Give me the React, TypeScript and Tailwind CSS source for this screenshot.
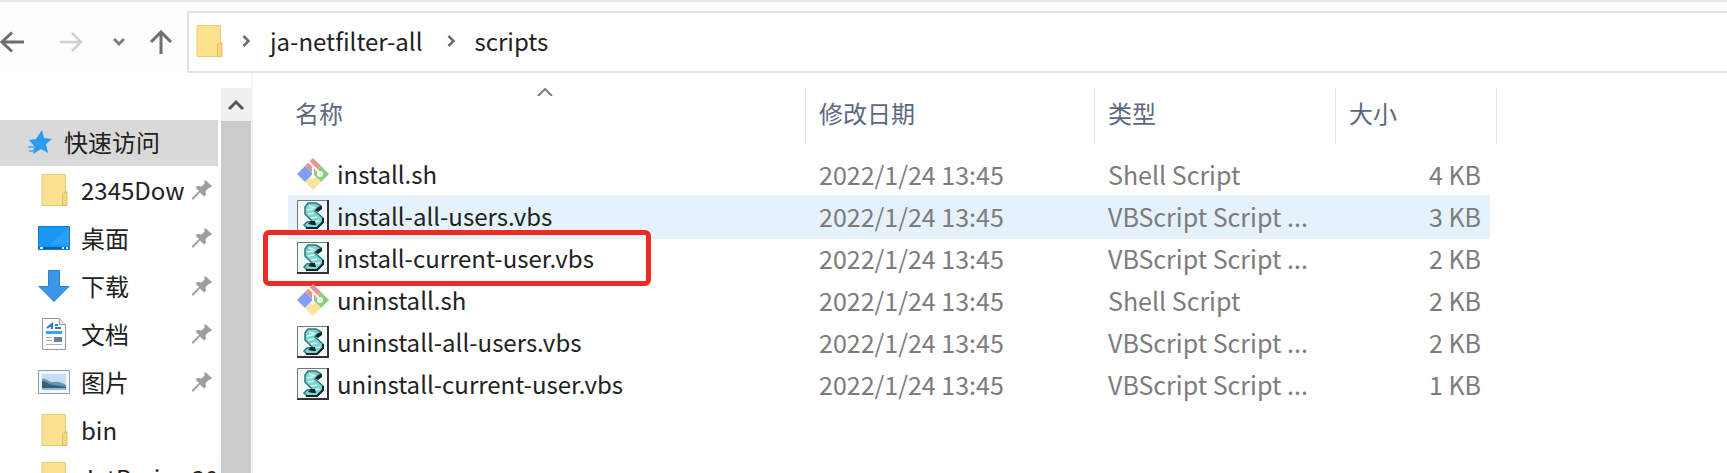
import React from 'react';
import { clsx } from 'clsx';

type FileKind = 'sh' | 'vbs';

interface FileEntry {
  name: string;
  kind: FileKind;
  type: string;
  size: string;
  hovered?: boolean;
  marked?: boolean;
}

const files: FileEntry[] = [
  { name: 'install.sh', kind: 'sh', type: 'Shell Script', size: '4 KB' },
  { name: 'install-all-users.vbs', kind: 'vbs', type: 'VBScript Script ...', size: '3 KB', hovered: true },
  { name: 'install-current-user.vbs', kind: 'vbs', type: 'VBScript Script ...', size: '2 KB', marked: true },
  { name: 'uninstall.sh', kind: 'sh', type: 'Shell Script', size: '2 KB' },
  { name: 'uninstall-all-users.vbs', kind: 'vbs', type: 'VBScript Script ...', size: '2 KB' },
  { name: 'uninstall-current-user.vbs', kind: 'vbs', type: 'VBScript Script ...', size: '1 KB' },
];

const FolderIcon = () => (
  <svg className="h-8 w-8 shrink-0" viewBox="0 0 32 32" aria-hidden="true">
    <path d="M4 0.5h23.5v31H4z" fill="#fce28f" stroke="#eccb72" />
    <path d="M24.5 19.5l4.5-2v14h-4.5z" fill="#f8d67a" stroke="#e8c060" />
  </svg>
);

const DesktopIcon = () => (
  <svg className="h-8 w-8 shrink-0" viewBox="0 0 32 32" aria-hidden="true">
    <path d="M0.5 4.5h31v23h-31z" fill="#1a97f2" stroke="#1279cc" />
    <path d="M31 5v18H12z" fill="#2aa1f7" />
    <path d="M1 25h30v2H1z" fill="#0c5ea8" />
    <path d="M2 26h3M24 26h2M28 26h2" stroke="#dff1ff" strokeWidth="2" />
  </svg>
);

const DownloadIcon = () => (
  <svg className="h-8 w-8 shrink-0" viewBox="0 0 32 32" aria-hidden="true">
    <path d="M10.5 0.5h11v16H31L16 31.5 1 16.500h9.500z" fill="#3a96e6" stroke="#2f80cc" />
  </svg>
);

const DocumentIcon = () => (
  <svg className="h-8 w-8 shrink-0" viewBox="0 0 32 32" aria-hidden="true">
    <path d="M4.5 0.5h17l6 6v25h-23z" fill="#fff" stroke="#8f9aa5" />
    <path d="M21.5 0.5v6h6" fill="#e6ebef" stroke="#8f9aa5" />
    <path d="M9 10l5-4v5M17 7h3M17 10h6" fill="none" stroke="#2d7cc4" strokeWidth="2" />
    <path d="M8 14.5h16" stroke="#3aa5ee" strokeWidth="3" />
    <path d="M8 19.5h6M8 22.5h6M8 26.500h16" stroke="#a7b1ba" />
    <path d="M16 19h8v5h-8z" fill="#64849f" />
  </svg>
);

const PictureIcon = () => (
  <svg className="h-8 w-8 shrink-0" viewBox="0 0 32 32" aria-hidden="true">
    <path d="M0.5 4.5h31v23h-31z" fill="#f4f7fa" stroke="#8ba0b3" />
    <path d="M4 8h24v16H4z" fill="#c3e0f6" />
    <path d="M4 13c5-1 7 4 12 3s8 1 12 3v5H4z" fill="#6d93ad" />
    <path d="M4 15c5 0 6 4 12 4l12 2v2H4z" fill="#365f7c" />
    <path d="M4 22h24v2H4z" fill="#8fb6d2" />
  </svg>
);

const PinIcon = () => (
  <svg className="h-5 w-5" viewBox="0 0 20 20" aria-hidden="true">
    <path d="M13 0l7 6-2 2-1-.5-3.500 3.500.5 4-2 1.500-4-4L1.500 19.500H0V18l7-7L3.500 7.500l2-1.500 4 .5L13 3l-1-1z" fill="#9b9fa3" />
  </svg>
);

const GitIcon = () => (
  <svg className="h-8 w-8 shrink-0" viewBox="0 0 32 32" aria-hidden="true">
    <path d="M16 0l8 8-8 8-8-8z" fill="#ec9090" />
    <path d="M8 8l8 8-8 8-8-8z" fill="#7f9ff0" />
    <path d="M24 8l8 8-8 8-8-8z" fill="#85d276" />
    <path d="M16 16l8 8-8 8-8-8z" fill="#fde3a0" />
    <path d="M11 3l11 11M16 9v9" fill="none" stroke="#fff" strokeWidth="2" />
    <circle cx="16" cy="19" r="2" fill="#fff" />
    <circle cx="23" cy="16" r="3" fill="#fff" />
  </svg>
);

const ScriptIcon = () => (
  <svg className="h-8 w-8 shrink-0" viewBox="0 0 32 32" aria-hidden="true">
    <path d="M0.5 0.5h31v31H0.5z" fill="#f3f9f9" stroke="#777" />
    <path d="M31 0v31H0" fill="none" stroke="#3a3033" strokeWidth="2" />
    <path d="M11 3h8l5 3-3 4-3 1 8 7v4l-6 6H10l-3-3 3-3 5-1-7-7V7z" fill="#7fd3d1" stroke="#2c7a7c" strokeWidth="1.5" />
    <path d="M12 6l6 2M10 10l6-1M11 14l6-1M14 18l6-1M17 22l6-1" stroke="#d9f7f5" strokeWidth="1.5" />
    <path d="M18 10l3-3 4-1v3l-4 3z" fill="#14262a" />
    <path d="M11 24l3-3h4l1 4h-3z" fill="#14262a" />
    <path d="M9 28h11l6-6v-4" fill="none" stroke="#14262a" strokeWidth="2" />
  </svg>
);

interface Place {
  label: string;
  icon: React.FC;
  pinned: boolean;
}

const places: Place[] = [
  { label: '2345Dow', icon: FolderIcon, pinned: true },
  { label: '桌面', icon: DesktopIcon, pinned: true },
  { label: '下载', icon: DownloadIcon, pinned: true },
  { label: '文档', icon: DocumentIcon, pinned: true },
  { label: '图片', icon: PictureIcon, pinned: true },
  { label: 'bin', icon: FolderIcon, pinned: false },
  { label: 'JetBrains 20', icon: FolderIcon, pinned: false },
];

const Crumb = () => (
  <svg className="h-3 w-2 shrink-0" viewBox="0 0 8 12" fill="none" stroke="#6b6b6b" strokeWidth="2.5" aria-hidden="true">
    <path d="M1.5 1L6.5 6l-5 5" />
  </svg>
);

const Toolbar = () => (
  <header className="flex h-[73px] shrink-0 border-t-2 border-[#e8e8e8] bg-[#fdfdfd] pt-[9px]">
    <nav className="flex w-[187px] shrink-0 items-center" aria-label="导航">
      <button type="button" aria-label="后退" className="w-[25px]">
        <svg className="h-6 w-6" viewBox="0 0 24 24" fill="none" stroke="#6e6e6e" strokeWidth="3">
          <path d="M24 12H2M12 2.5L2 12l10 9.5" />
        </svg>
      </button>
      <button type="button" aria-label="前进" className="ml-[34px] w-6">
        <svg className="h-6 w-6" viewBox="0 0 24 24" fill="none" stroke="#d2d2d2" strokeWidth="2.5">
          <path d="M1 12h21M13 3l9 9-9 9" />
        </svg>
      </button>
      <button type="button" aria-label="最近浏览的位置" className="ml-[30px] w-3">
        <svg className="h-3 w-3" viewBox="0 0 12 12" fill="none" stroke="#7d7d7d" strokeWidth="3">
          <path d="M1 3l5 5 5-5" />
        </svg>
      </button>
      <button type="button" aria-label="上移" className="ml-6 w-6">
        <svg className="h-6 w-6" viewBox="0 0 24 24" fill="none" stroke="#6e6e6e" strokeWidth="3">
          <path d="M12 24V2M2 12L12 2l10 10" />
        </svg>
      </button>
    </nav>
    <div className="flex flex-1 items-center border-y-2 border-l-2 border-[#e2e2e2] bg-white pb-0.5 pl-1">
      <FolderIcon />
      <span className="ml-[17px] flex">
        <Crumb />
      </span>
      <button type="button" className="ml-5">ja-netfilter-all</button>
      <span className="ml-6 flex">
        <Crumb />
      </span>
      <button type="button" className="ml-5">scripts</button>
    </div>
  </header>
);

const Sidebar = () => (
  <aside className="flex w-[251px] shrink-0 overflow-hidden pt-[15px]">
    <nav className="w-[221px] shrink-0 pt-8" aria-label="快速访问">
      <a href="#quick" className="mr-[3px] flex h-[46px] items-center bg-[#d9d9d9] pb-0.5 pl-7">
        <svg className="h-6 w-6" viewBox="0 0 24 24" aria-hidden="true">
          <path d="M14 0l2 8 8 1-6 5 2 9-7-4-8 5 1-8-5-6 7-1z" fill="#2b9af0" />
          <path d="M0 17h7M1 21h5" stroke="#5fb4f5" strokeWidth="2" />
        </svg>
        <span className="ml-3">快速访问</span>
      </a>
      <ul>
        {places.map(({ label, icon: Icon, pinned }) => (
          <li key={label}>
            <a href={`#${label}`} className="flex h-12 items-center pl-[38px] whitespace-nowrap">
              <Icon />
              <span className="ml-[11px] w-[111px] shrink-0">{label}</span>
              {pinned && <PinIcon />}
            </a>
          </li>
        ))}
      </ul>
    </nav>
    <div className="flex w-[30px] shrink-0 flex-col bg-[#cbcbcb]">
      <button type="button" aria-label="向上滚动" className="flex h-[33px] items-center justify-center bg-[#f0f0f0]">
        <svg className="h-4 w-4" viewBox="0 0 16 16" fill="none" stroke="#555" strokeWidth="3">
          <path d="M1 12l7-7 7 7" />
        </svg>
      </button>
    </div>
  </aside>
);

const ColumnEdge = ({ className }: { className: string }) => (
  <span className={clsx('absolute top-0 h-14 w-px bg-[#e3e3e3]', className)} />
);

const FileTable = () => (
  <main className="flex-1 border-l-2 border-[#f4f4f4] pt-[15px] pl-9">
    <table className="w-[1200px] table-fixed border-collapse text-left text-[25px] text-[#7c7c7c]">
      <thead className="text-[24px] text-[#5c6880]">
        <tr className="h-[66px] align-top">
          <th scope="col" className="relative w-[517px] pt-[9px] pl-1.5 font-normal" aria-sort="ascending">
            <button type="button">名称</button>
            <svg className="absolute top-0 left-[248px] h-2 w-4" viewBox="0 0 16 8" fill="none" stroke="#7c7c7c" strokeWidth="2" aria-hidden="true">
              <path d="M1 8l7-7 7 7" />
            </svg>
            <ColumnEdge className="right-0" />
          </th>
          <th scope="col" className="relative w-[289px] pt-[9px] pl-[13px] font-normal">
            <button type="button">修改日期</button>
            <ColumnEdge className="right-0" />
          </th>
          <th scope="col" className="relative w-[241px] pt-[9px] pl-[13px] font-normal">
            <button type="button">类型</button>
            <ColumnEdge className="right-0" />
          </th>
          <th scope="col" className="relative pt-[9px] pl-[13px] font-normal">
            <button type="button">大小</button>
            <ColumnEdge className="-right-2" />
          </th>
        </tr>
      </thead>
      <tbody>
        {files.map((file) => (
          <tr
            key={file.name}
            className={clsx('h-[42px]', file.hovered && 'bg-[#e5f1fb] shadow-[0_0_0_1px_#e5f1fb]')}
          >
            <td className="relative pb-[3px] pl-2 text-[24px] text-[#222]">
              <span className="flex items-center gap-2">
                {file.kind === 'sh' ? <GitIcon /> : <ScriptIcon />}
                {file.name}
              </span>
              {file.marked && (
                <span className="absolute -top-2 -left-[26px] h-[56px] w-[388px] rounded-md border-5 border-[#ee2a24]" />
              )}
            </td>
            <td className="pb-[3px] pl-[13px]">2022/1/24 13:45</td>
            <td className="pb-[3px] pl-[13px] whitespace-nowrap">{file.type}</td>
            <td className="pr-2 pb-[3px] text-right">{file.size}</td>
          </tr>
        ))}
      </tbody>
    </table>
  </main>
);

const App: React.FC = () => {
  return (
    <div className="flex h-screen flex-col overflow-hidden bg-white font-['Noto_Sans_CJK_SC',sans-serif] text-[24px] leading-8 text-[#222]">
      <Toolbar />
      <div className="flex min-h-0 flex-1">
        <Sidebar />
        <FileTable />
      </div>
    </div>
  );
};

export default App;
